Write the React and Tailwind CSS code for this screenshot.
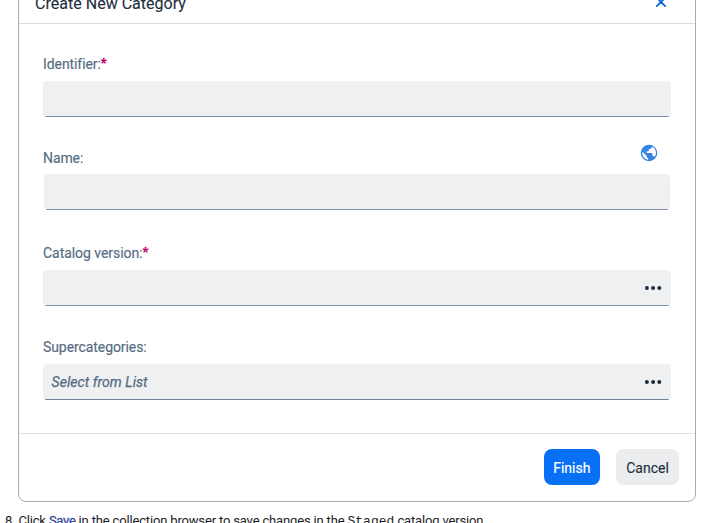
import React from "react";

const fieldBase =
  "relative flex h-9 items-center justify-between overflow-hidden rounded-[4px] bg-[#eff0f2] pl-[8px] pr-[9px]";

function Field({ label, required, labelClass, className, boxClass, lineClass, icon, placeholder, more }) {
  return (
    <div className={className}>
      <div className="flex h-5 items-center justify-between">
        <label className={"flex whitespace-nowrap text-[14px] leading-5 text-[#556b82] [-webkit-text-stroke:0.15px_#556b82] " + labelClass}>
          {label}
          {required && (
            <span className="relative -top-[1px] text-[13px] font-bold tracking-normal text-[#ba066c] [-webkit-text-stroke:0.3px_#ba066c]">*</span>
          )}
        </label>
        {icon}
      </div>
      <div className={fieldBase + " " + boxClass}>
        <span className="whitespace-nowrap pt-px pl-[0.5px] text-[14px] italic tracking-[0.06px] text-[#556b82] [-webkit-text-stroke:0.25px_#556b82]">{placeholder}</span>
        {more && (
          <svg width="18" height="6" viewBox="0 0 18 6" fill="#1d2d3e">
            <circle cx="2.9" cy="3" r="2" />
            <circle cx="9.1" cy="3" r="2" />
            <circle cx="15.3" cy="3" r="2" />
          </svg>
        )}
        <span className={"absolute bottom-0 left-0.5 right-0.5 h-px " + lineClass} />
      </div>
    </div>
  );
}

function Globe() {
  return (
    <svg className="relative -top-[5px] mr-[12px]" width="20" height="20" viewBox="0 0 24 24">
      <circle cx="12" cy="12" r="9.9" fill="#3584e4" />
      <path
        fill="#fff"
        d="M15 5.200 16.400 4.900C19 6.300 20.400 8.800 20.400 12c0 1.800-.5 3.300-1.500 4.600-.4-.7-1.100-1-1.900-1h-.9v-2.500c0-.6-.4-1-1-1H9.300V10h1.600c.6 0 1-.4 1-1V7.200h1.500c.9 0 1.600-.9 1.600-2zM4.100 10.600 9.200 15.700v.6c0 1 .8 1.800 1.800 1.800v1.900C7 19.500 3.900 16.200 3.900 12z"
      />
    </svg>
  );
}

export default function App() {
  return (
    <div className="h-[523px] w-[710px] overflow-hidden bg-white font-['Roboto',sans-serif]">
      <section className="-mt-5 ml-[18px] flex h-[522px] w-[678px] flex-col rounded-b-[8px] border border-[#a3adba] bg-white">
        <header className="flex h-[43px] shrink-0 items-center justify-between border-b border-[#d9dbde] pl-4 pr-[28px]">
          <h1 className="relative top-[2px] text-[16px] tracking-[0.02px] text-[#1d2d3e] [-webkit-text-stroke:0.1px_#1d2d3e]">Create New Category</h1>
          <svg width="12" height="12" viewBox="0 0 12 12" fill="none" stroke="#0064d9" strokeWidth="1.7" strokeLinecap="round">
            <path d="M1.8 1.8 10.2 10.2M10.2 1.8 1.8 10.2" />
          </svg>
        </header>
        <main className="flex-1 px-6 pt-[30px]">
          <Field label="Identifier:" required labelClass="tracking-[-0.08px]" className="" boxClass="mt-[7px]" lineClass="bg-[#778ca3]" />
          <Field label="Name:" labelClass="tracking-[-0.1px]" className="mt-[31px]" boxClass="mx-px mt-[6px]" lineClass="bg-[#8492a5]" icon={<Globe />} />
          <Field label="Catalog version:" required labelClass="tracking-[-0.05px]" className="mt-[33px]" boxClass="mt-[7px]" lineClass="bg-[#8292aa]" more />
          <Field label="Supercategories:" labelClass="tracking-[-0.08px]" className="mt-[31px]" boxClass="mt-[7px]" lineClass="bg-[#708294]" placeholder="Select from List" more />
        </main>
        <footer className="flex h-[68px] shrink-0 items-center justify-end gap-4 border-t border-[#e0e2e5] pb-[2px] pr-4 text-[14px]">
          <button className="h-9 w-[56.5px] rounded-[8px] bg-[#0770f5] pt-[3px] text-white [-webkit-text-stroke:0.2px_white]">Finish</button>
          <button className="h-9 w-[63px] rounded-[8px] bg-[#eaecee] pt-[3px] text-[#1d2d3e] [-webkit-text-stroke:0.1px_#1d2d3e]">Cancel</button>
        </footer>
      </section>
      <div className="mt-[11px] flex gap-[3px] whitespace-nowrap pl-[5px] text-[13px] leading-4 tracking-[-0.16px] text-[#1d1d1f]">
        <span>8.</span>
        <p>
          Click <span className="tracking-[-0.3px] text-[#354a9f] [-webkit-text-stroke:0.3px_#354a9f]">Save</span> in the collection browser to save changes in the{" "}
          <code className="font-['Liberation_Mono',monospace] text-[13px] tracking-normal">Staged</code> catalog version.
        </p>
      </div>
    </div>
  );
}
